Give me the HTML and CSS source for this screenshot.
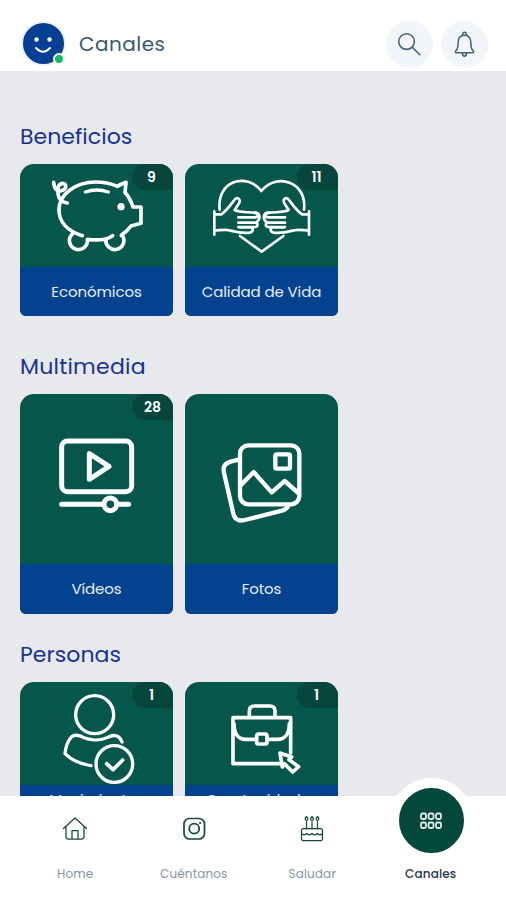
FILE: index.html
```html
<!DOCTYPE html>
<html lang="es">
<head>
<meta charset="utf-8">
<title>Canales</title>
<link rel="stylesheet" href="styles.css">
</head>
<body>
<div class="app">
  <header class="topbar">
    <div class="avatar">
      <svg viewBox="0 0 40 40"><circle cx="13.5" cy="16.5" r="2.2" fill="#fff"/><circle cx="26.500" cy="16.500" r="2.2" fill="#fff"/><path d="M13 25q7 7.500 14 0" fill="none" stroke="#fff" stroke-width="2" stroke-linecap="round"/></svg>
      <span class="status"></span>
    </div>
    <h1>Canales</h1>
    <button class="round" aria-label="Buscar">
      <svg viewBox="0 0 48 48"><circle cx="21" cy="21" r="8"/><path d="M27 27l7.500 7.500"/></svg>
    </button>
    <button class="round" aria-label="Avisos">
      <svg viewBox="0 0 48 48"><path d="M15 30.500c2-1.500 2.500-4 2.500-8 0-5 2-8 6.500-8s6.500 3 6.500 8c0 4 .5 6.500 2.500 8 .8 1 .2 2-.8 2H15.800c-1 0-1.600-1-.8-2zM22 14.500c-.3-4 4.300-4 4 0M21.800 32.500c.3 4.500 4.100 4.500 4.400 0"/></svg>
    </button>
  </header>

  <main>
    <section class="short">
      <h2>Beneficios</h2>
      <div class="cards">
        <article class="card">
          <span class="badge">9</span>
          <svg class="art" viewBox="30 27 459 309">
            <g stroke-width="11"><path d="M217 242c-46-14-70-43-70-78 0-45 48-83 110-83 25 0 46 5 65 13 10-6 18-9 26-12l-3 31c13 12 19 28 24 43h24v49l-30 8c-9 13-18 20-29 28"/><path d="M188 236a27 27 0 1 0 44 17q30 4 56-1a27 27 0 1 0 48-12"/><path d="M288 252q11-3 20-10"/><path d="M131 82c2 20 10 28 23 25 17-3 17-22 4-22-14 1-17 17-13 36 2 12 13 21 27 23"/><path d="M226 111q34-12 69 0" stroke-width="10"/></g>
            <circle cx="333" cy="155" r="11" class="solid"/>
          </svg>
          <div class="label">Económicos</div>
        </article>
        <article class="card">
          <span class="badge">11</span>
          <svg class="art" viewBox="22 27 459 309">
            <g stroke-width="8"><path d="M126 164C116 77 207 51 251 108c45-57 138-28 128 56"/><path d="M187 243l65 47 65-47"/>
            <path id="hand" d="M110 169v70M110 178h21c16-11 27-27 39-43 9-11 19-3 15 8l-14 22c19 9 37 5 62 9 14 4 8 13-2 13h-49M231 172c16 1 20 18 6 30M182 203h51c10 0 8 13-2 13h-49M184 217h36c9 1 6 14-4 16-24 3-45-3-61-7-13-4-27 0-45 1"/>
            <use href="#hand" transform="translate(504 0) scale(-1 1)"/></g>
          </svg>
          <div class="label">Calidad de Vida</div>
        </article>
      </div>
    </section>

    <section class="tall">
      <h2 class="wide">Multimedia</h2>
      <div class="cards">
        <article class="card">
          <span class="badge">28</span>
          <svg class="art" viewBox="30 27 459 510">
            <g stroke-width="15"><rect x="155" y="168" width="210" height="152" rx="18"/><path d="M238 206v77l59-39z"/><path d="M155 358h121M325 358h31"/><circle cx="301" cy="358" r="19"/></g>
          </svg>
          <div class="label">Vídeos</div>
        </article>
        <article class="card">
          <svg class="art" viewBox="22 27 459 510">
            <g stroke-width="13"><rect x="187" y="181" width="178" height="177" rx="25"/><rect x="293" y="208" width="44" height="43" rx="4"/><path d="M190 300l38-39 54 61 39-34 41 36"/><path d="M183 224l-24 6c-18 5-24 17-20 33l28 123c4 17 17 24 34 19l112-28q14-4 18-13"/></g>
          </svg>
          <div class="label">Fotos</div>
        </article>
      </div>
    </section>

    <section class="short people">
      <h2>Personas</h2>
      <div class="cards">
        <article class="card">
          <span class="badge">1</span>
          <svg class="art" viewBox="30 156 459 309">
            <g stroke-width="10"><circle cx="254" cy="254" r="57"/><path d="M243 407c-32-5-59-17-78-36 2-20 8-38 20-51 8-7 16-5 26-2 31 16 56 16 87 2 17-8 31-2 38 16"/><circle cx="313" cy="402" r="55"/><path d="M290 401l19 18 29-29" stroke-width="11"/></g>
          </svg>
          <div class="label">Movimientos</div>
        </article>
        <article class="card">
          <span class="badge">1</span>
          <svg class="art" viewBox="22 36 459 309">
            <g stroke-width="11"><path d="M306 281H166V143h173v106M215 141v-18q0-15 15-15h47q15 0 15 15v18M169 161c0 27 11 47 36 47h30M270 208h29c25 0 36-20 36-47"/><rect x="237" y="192" width="31" height="30" rx="5"/><path d="M307 249l35 12-8 8 29 21-18 16-25-25-6 10z"/></g>
          </svg>
          <div class="label">Oportunidades</div>
        </article>
      </div>
    </section>
  </main>

  <nav class="tabs">
    <a class="tab"><svg viewBox="0 0 26 26"><path d="M1.500 12.500L13 2l11.500 10.500M4 11v9.500q0 2.500 2.500 2.500h13q2.500 0 2.500-2.500V11M10 23v-8.500h6V23"/></svg><span>Home</span></a>
    <a class="tab"><svg viewBox="0 0 26 26"><rect x="3" y="2.500" width="20.500" height="20.500" rx="5.500" stroke-width="1.700"/><circle cx="13.200" cy="12.700" r="5" stroke-width="1.800"/><circle cx="19" cy="7" r=".7" stroke-width="1"/></svg><span>Cuéntanos</span></a>
    <a class="tab"><svg viewBox="0 0 26 26"><path d="M7.500 13V5.500M13 13V5.500M18.500 13V5.500M7.500 4.500q-2.800-1 0-4 2.800 3 0 4zM13 4.500q-2.800-1 0-4 2.800 3 0 4zM18.500 4.500q-2.800-1 0-4 2.800 3 0 4zM4.500 12.500h17q2 0 2 2V23q0 1.500-1.500 1.500H4Q2.500 24.500 2.500 23v-8.500q0-2 2-2zM2.500 17.500q2.600 2.600 5.200 0 2.600 2.600 5.300 0 2.600 2.600 5.300 0 2.600 2.600 5.200 0"/></svg><span>Saludar</span></a>
    <a class="tab active"><i class="bubble"><svg viewBox="0 0 26 20"><rect x="3" y="2.500" width="5" height="5.500" rx="1.500"/><rect x="10.500" y="2.500" width="5" height="5.500" rx="1.500"/><rect x="18" y="2.500" width="5" height="5.500" rx="1.500"/><rect x="3" y="11.500" width="5" height="5.500" rx="1.500"/><rect x="10.500" y="11.500" width="5" height="5.500" rx="1.500"/><rect x="18" y="11.500" width="5" height="5.500" rx="1.500"/></svg></i><span>Canales</span></a>
  </nav>
</div>
</body>
</html>
```
FILE: styles.css
```css
* { box-sizing: border-box; }
body { margin: 0; font-family: Poppins, Inter, "Open Sans", sans-serif; }
.app { width: 506px; height: 900px; display: flex; flex-direction: column; overflow: hidden; background: #e8e9ed; }
svg { display: block; fill: none; stroke-linecap: round; stroke-linejoin: round; }

.topbar { height: 71px; flex: none; display: flex; align-items: flex-start; padding: 21px 18px 0 21px; background: #fff; }
.avatar { position: relative; width: 45px; height: 45px; border-radius: 50%; border: 2.5px solid #edf1f8; background: #033f94; }
.avatar svg { width: 40px; height: 40px; }
.status { position: absolute; right: -1px; bottom: -1px; width: 12px; height: 12px; border: 2px solid #fff; border-radius: 50%; background: #0fbe62; }
h1 { flex: 1; margin: 10px 0 0 13px; font-size: 20px; line-height: 27px; font-weight: 400; letter-spacing: .5px; color: #38576d; }
.round { width: 47px; height: 47px; margin-left: 8px; padding: 0; border: 0; border-radius: 50%; background: #f2f5f9; }
.round svg { width: 47px; height: 47px; stroke: #41647a; stroke-width: 1.6; }

main { flex: 1; min-height: 0; overflow: hidden; padding: 49px 20px 0; }
h2 { margin: 0 0 11px; padding-top: 1px; height: 33px; line-height: 32px; font-size: 22px; font-weight: 400; letter-spacing: .05px; color: #15319a; white-space: nowrap; }
.wide { letter-spacing: .25px; }
.cards { display: flex; gap: 12px; }
.card { position: relative; width: 153px; display: flex; flex-direction: column; overflow: hidden; border-radius: 14px 14px 6px 6px; background: #05564b; }
.short .card { height: 152px; }
.short .art { height: 103px; }
.tall .card { height: 220px; }
.tall .art { height: 170px; }
.short { margin-bottom: 34px; }
.tall { margin-bottom: 24px; }
.art { width: 153px; stroke: #fff; }
.solid { fill: #fff; stroke: none; }
.label { flex: 1; display: flex; align-items: center; justify-content: center; background: #03428f; color: #e8eefb; font-size: 15px; font-weight: 400; letter-spacing: -.1px; white-space: nowrap; }
.tall .label { padding-bottom: 2px; }
.people .label { padding-bottom: 20px; }
.badge { position: absolute; top: 0; right: 0; width: 41px; height: 26px; border-radius: 14px 0 0 14px; background: #06463c; color: #fff; font-size: 14px; line-height: 26px; font-weight: 600; text-align: center; }
.short .badge { padding-right: 2px; }

.tabs { height: 104px; flex: none; display: flex; padding: 0 16px; background: #fff; }
.tab { position: relative; width: 118.5px; flex: none; display: flex; flex-direction: column; align-items: center; padding-top: 20px; color: #8793a5; font-size: 12px; line-height: 18px; }
.tab > svg { width: 26px; height: 26px; stroke: #174a3c; stroke-width: 1.25; }
.tab span { margin-top: 23px; letter-spacing: .15px; }
.active { padding-top: 69px; color: #263655; font-weight: 500; }
.active span { margin-top: 0; }
.bubble { position: absolute; top: -18px; left: 50%; width: 85px; height: 85px; margin-left: -42px; border: 10px solid #fff; border-radius: 50%; background: #04483c; display: flex; align-items: center; justify-content: center; }
.bubble svg { width: 26px; height: 20px; stroke: #dce8e4; stroke-width: 1.8; }
```
